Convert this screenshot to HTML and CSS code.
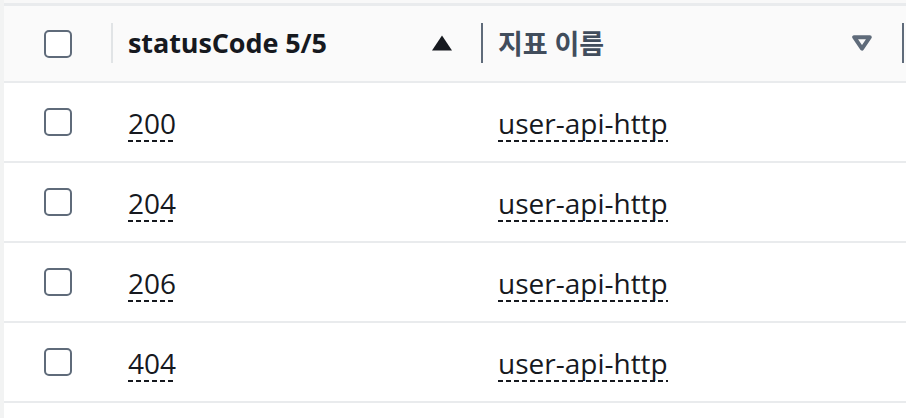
FILE: index.html
```html
<!DOCTYPE html>
<html lang="ko">
<head>
<meta charset="utf-8">
<title>Metrics table</title>
<link rel="stylesheet" href="styles.css">
</head>
<body>
<div class="page">
  <div class="table">
    <div class="top-gap"></div>
    <div class="row head">
      <div class="cell check-cell"><span class="checkbox"></span></div>
      <div class="cell col col-a sep-light">
        <span class="head-text sorted">statusCode 5/5</span>
        <svg class="sort-icon" width="20" height="16" viewBox="0 0 20 16"><polygon points="10,0.5 20,15.5 0,15.5" fill="#16191f"/></svg>
      </div>
      <div class="cell col col-b sep-dark">
        <span class="head-text">지표 이름</span>
        <svg class="sort-icon" width="20" height="16" viewBox="0 0 20 16"><polygon points="2.2,2.2 17.8,2.2 10,13.6" fill="none" stroke="#5f6b7a" stroke-width="4" stroke-linejoin="round"/></svg>
      </div>
      <div class="cell col-rest sep-dark"></div>
    </div>
    <div class="row">
      <div class="cell check-cell"><span class="checkbox"></span></div>
      <div class="cell col col-a"><span class="dotted">200</span></div>
      <div class="cell col col-b"><span class="dotted">user-api-http</span></div>
      <div class="cell col-rest"></div>
    </div>
    <div class="row">
      <div class="cell check-cell"><span class="checkbox"></span></div>
      <div class="cell col col-a"><span class="dotted">204</span></div>
      <div class="cell col col-b"><span class="dotted">user-api-http</span></div>
      <div class="cell col-rest"></div>
    </div>
    <div class="row">
      <div class="cell check-cell"><span class="checkbox"></span></div>
      <div class="cell col col-a"><span class="dotted">206</span></div>
      <div class="cell col col-b"><span class="dotted">user-api-http</span></div>
      <div class="cell col-rest"></div>
    </div>
    <div class="row">
      <div class="cell check-cell"><span class="checkbox"></span></div>
      <div class="cell col col-a"><span class="dotted">404</span></div>
      <div class="cell col col-b"><span class="dotted">user-api-http</span></div>
      <div class="cell col-rest"></div>
    </div>
  </div>
</div>
</body>
</html>
```

FILE: styles.css
```css
html, body {
  margin: 0;
  padding: 0;
}
body {
  width: 906px;
  height: 418px;
  overflow: hidden;
  background: #f2f3f3;
  font-family: "Open Sans", "Noto Sans CJK KR", sans-serif;
  color: #16191f;
}
.page {
  padding-left: 4px;
  height: 100%;
  box-sizing: border-box;
}
.table {
  background: #ffffff;
  height: 100%;
}
.top-gap {
  height: 3px;
  background: #f8f8f8;
}
.row {
  display: flex;
  align-items: stretch;
  height: 78px;
  border-bottom: 2px solid #e9ebed;
  background: #ffffff;
}
.row.head {
  height: 75px;
  background: #fafafa;
  border-top: 3px solid #e9ebed;
}
.cell {
  display: flex;
  align-items: center;
  box-sizing: border-box;
  position: relative;
}
.check-cell {
  width: 107px;
  padding-left: 40px;
}
.checkbox {
  display: block;
  width: 28px;
  height: 28px;
  box-sizing: border-box;
  border: 2px solid #5f6b7a;
  border-radius: 5px;
  background: #ffffff;
}
.col {
  padding-left: 17px;
  padding-right: 29px;
  justify-content: space-between;
}
.col-a {
  width: 370px;
}
.col-b {
  width: 421px;
  padding-right: 30px;
}
.col-rest {
  flex: 1;
}
.sep-light::before,
.sep-dark::before {
  content: "";
  position: absolute;
  left: 0;
  top: 17px;
  width: 2px;
  height: 40px;
}
.sep-light::before {
  background: #e1e4e6;
}
.sep-dark::before {
  background: #5f6b7a;
}
.head-text {
  font-size: 27px;
  font-weight: 700;
  color: #414d5c;
  letter-spacing: -0.1px;
  margin-top: -2px;
}
.head-text.sorted {
  color: #16191f;
}
.sort-icon {
  display: block;
  margin-top: -1px;
}
.dotted {
  font-size: 28px;
  line-height: 36px;
  color: #16191f;
  padding-bottom: 1px;
  background-image: linear-gradient(to right, #16191f 0 5px, transparent 5px 8px);
  background-size: 8px 2px;
  background-repeat: repeat-x;
  background-position: left bottom;
  margin-top: 2px;
}
```
